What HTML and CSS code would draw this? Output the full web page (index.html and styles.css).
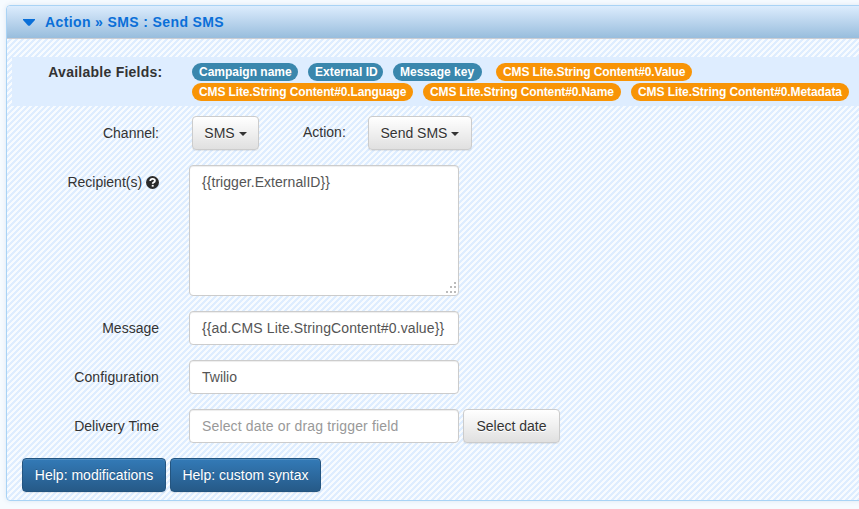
FILE: index.html
```
<!DOCTYPE html>
<html lang="en">
<head>
<meta charset="utf-8">
<title>Action: Send SMS</title>
<link rel="stylesheet" href="styles.css">
</head>
<body>
<section class="panel">
  <header class="panel-head"><svg class="toggle" viewBox="0 0 12 7"><path d="M0 0h12v1L7 6.500Q6 7.200 5 6.500L0 1z" fill="#0a6fd8"/></svg><span>Action » SMS : Send SMS</span></header>
  <div class="fields">
    <div class="fields-label">Available Fields:</div>
    <div class="badges">
      <div class="badge-row"><span class="badge w102">Campaign name</span><span class="badge w75">External ID</span><span class="badge w89">Message key</span><span class="badge orange gap w196">CMS Lite.String Content#0.Value</span></div>
      <div class="badge-row"><span class="badge orange w221">CMS Lite.String Content#0.Language</span><span class="badge orange w198">CMS Lite.String Content#0.Name</span><span class="badge orange w218">CMS Lite.String Content#0.Metadata</span></div>
    </div>
  </div>
  <div class="row selects">
    <label class="label">Channel:</label>
    <button class="btn channel">SMS<i class="caret"></i></button>
    <span class="action-label">Action:</span>
    <button class="btn action">Send SMS<i class="caret"></i></button>
  </div>
  <div class="row tall">
    <label class="label">Recipient(s) <svg class="help" viewBox="0 0 12 12"><circle cx="6" cy="6" r="6" fill="#2b2b2b"/><path d="M3.900 4.600Q4 2.700 6.100 2.700T8.200 4.400Q8.200 5.300 7 5.900Q6.200 6.300 6.200 7.200" fill="none" stroke="#fff" stroke-width="1.700"/><path d="M5.300 8.200h1.800v1.600H5.300z" fill="#fff"/></svg></label>
    <div class="input area">{{trigger.ExternalID}}<svg class="grip" viewBox="0 0 12 12"><path d="M9 0h2v2H9zM5 4h2v2H5zM9 4h2v2H9zM1 9h2v2H1zM5 9h2v2H5zM9 9h2v2H9z" fill="#bbb"/></svg></div>
  </div>
  <div class="row"><label class="label">Message</label><div class="input message">{{ad.CMS Lite.StringContent#0.value}}</div></div>
  <div class="row"><label class="label wide">Configuration</label><div class="input">Twilio</div></div>
  <div class="row"><label class="label">Delivery Time</label><div class="input hint">Select date or drag trigger field</div><button class="btn date">Select date</button></div>
  <footer class="actions"><button class="btn primary mod">Help: modifications</button><button class="btn primary syntax">Help: custom syntax</button></footer>
</section>
</body>
</html>
```
FILE: styles.css
```
* { box-sizing: border-box; }
body {
  margin: 0;
  height: 509px;
  overflow: hidden;
  background: #f6fbff;
  color: #333;
  font: 14px/20px "Liberation Sans", Arial, sans-serif;
}
.panel {
  margin: 5px -10px 0 6px;
  height: 496px;
  border: 1px solid #a9d3f5;
  border-radius: 4px;
  background: linear-gradient(135deg, #deedff 25%, #f7fbff 25% 50%, #deedff 50% 75%, #f7fbff 75%) 0 0 / 6px 6px;
  box-shadow: 0 0 5px rgba(60, 90, 150, .13);
}
.panel-head {
  display: flex;
  align-items: center;
  height: 33px;
  padding-left: 16px;
  border-bottom: 1px solid #cccdd3;
  border-radius: 3px 0 0 0;
  background: linear-gradient(#dcecfd, #98bddd);
  color: #0a6fd8;
  font-weight: bold;
  letter-spacing: .38px;
}
.toggle { width: 12px; height: 7px; margin-right: 10px; }
.fields {
  display: flex;
  height: 49px;
  margin: 18px 0 0 5px;
  background: #deedff;
}
.fields-label {
  width: 180px;
  padding: 5px 29.5px 0 0;
  text-align: right;
  font-weight: bold;
  letter-spacing: .25px;
  white-space: nowrap;
}
.badges { padding-top: 6px; }
.badge-row { display: flex; gap: 10px; margin-bottom: 2px; }
.badge {
  height: 18px;
  padding-left: 7px;
  border-radius: 9px;
  background: #3a87ad;
  color: #fff;
  font-size: 12px;
  line-height: 18px;
  font-weight: bold;
  white-space: nowrap;
}
.orange { background: #f89406; letter-spacing: -.12px; }
.gap { margin-left: 4px; }
.w102 { width: 106px; }
.w75 { width: 75px; }
.w89 { width: 89px; }
.w196 { width: 196px; }
.w221 { width: 221px; }
.w198 { width: 198px; }
.w218 { width: 218px; letter-spacing: -.08px; }
.row { display: flex; height: 34px; margin-bottom: 15px; }
.selects { margin-top: 10px; }
.tall { height: 131px; }
.label { width: 152px; padding-top: 7px; margin-right: 30px; text-align: right; }
.wide { letter-spacing: .12px; }
.help { width: 13px; height: 13px; vertical-align: -2px; }
.input {
  position: relative;
  width: 270px;
  height: 34px;
  padding: 6px 12px;
  border: 1px solid #ccc;
  border-radius: 4px;
  background: #fff;
  color: #555;
  box-shadow: inset 0 1px 1px rgba(0, 0, 0, .075);
  white-space: nowrap;
}
.message { letter-spacing: .11px; }
.area { height: 131px; letter-spacing: .05px; }
.grip { position: absolute; right: 1px; bottom: 1px; width: 12px; height: 12px; }
.hint { color: #999; letter-spacing: .15px; }
.btn {
  height: 34px;
  padding: 0;
  border: 1px solid #ccc;
  border-radius: 4px;
  background: linear-gradient(#fff, #e0e0e0);
  color: #333;
  font: inherit;
  text-shadow: 0 1px 0 #fff;
  box-shadow: inset 0 1px 0 rgba(255, 255, 255, .15), 0 1px 1px rgba(0, 0, 0, .075);
}
.caret {
  display: inline-block;
  margin-left: 4px;
  border: 4px solid transparent;
  border-top-color: #333;
  border-bottom: 0;
  vertical-align: middle;
}
.channel { width: 67px; margin-left: 3px; }
.action-label { width: 65px; margin-left: 44px; padding-top: 6px; }
.action { width: 104px; }
.date { width: 97px; margin-left: 4px; }
.actions { display: flex; gap: 4px; padding-left: 15px; }
.primary {
  border-color: #245580;
  background: linear-gradient(#337ab7, #265a88);
  color: #fff;
  text-shadow: 0 -1px 0 rgba(0, 0, 0, .2);
}
.mod { width: 144px; }
.syntax { width: 151px; }
```
